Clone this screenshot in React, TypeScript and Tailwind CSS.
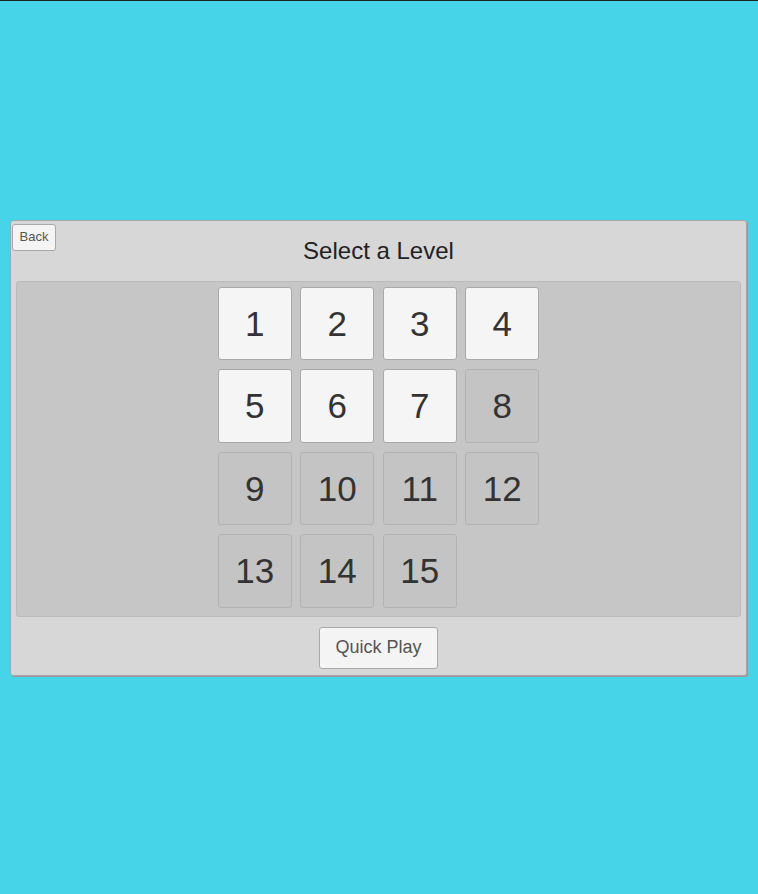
const levels = Array.from({ length: 15 }, (_, i) => i + 1);
const unlocked = 7;

function LevelTile({ n }: { n: number }) {
  const open = n <= unlocked;
  return (
    <button
      className={`w-[74px] h-[73.5px] rounded-[3px] border flex items-center justify-center text-[35px] leading-none text-[#333333] ${
        open ? 'bg-[#f5f5f5] border-[#a9a9a9]' : 'bg-[#c4c4c4] border-[#b2b2b2]'
      }`}
    >
      {n}
    </button>
  );
}

export default function App() {
  return (
    <div
      className="h-screen w-full bg-[#45d4e8] border-t border-[#1e2628] flex items-center"
      style={{ fontFamily: '"Liberation Sans", Arial, sans-serif' }}
    >
      <div className="relative ml-[10px] mr-[11px] flex-1 h-[456px] bg-[#d7d7d7] border border-[#a6a6a6] rounded-[3px] shadow-[1px_1px_0_#9a9a9a] flex flex-col">
        {/* back button over the header */}
        <button className="absolute left-[1px] top-[3px] w-[44px] h-[27px] bg-[#f4f4f4] border border-[#a9a9a9] rounded-[3px] text-[13px] text-[#555555] flex items-center justify-center">
          Back
        </button>

        <div className="h-[60px] flex items-center justify-center text-[24px] text-[#222222] pt-[1px]">
          Select a Level
        </div>

        <div className="mx-[5px] h-[336px] bg-[#c6c6c6] border border-[#bbbbbb] rounded-[3px] flex justify-center pt-[5px]">
          <div className="grid grid-cols-[repeat(4,74px)] auto-rows-[73.5px] gap-x-[8.5px] gap-y-[9px] content-start">
            {levels.map(n => (
              <LevelTile key={n} n={n} />
            ))}
          </div>
        </div>

        <div className="flex justify-center pt-[10px]">
          <button className="w-[119px] h-[42px] bg-[#f4f4f4] border border-[#a9a9a9] rounded-[3px] text-[18px] text-[#555555] flex items-center justify-center">
            Quick Play
          </button>
        </div>
      </div>
    </div>
  );
}
